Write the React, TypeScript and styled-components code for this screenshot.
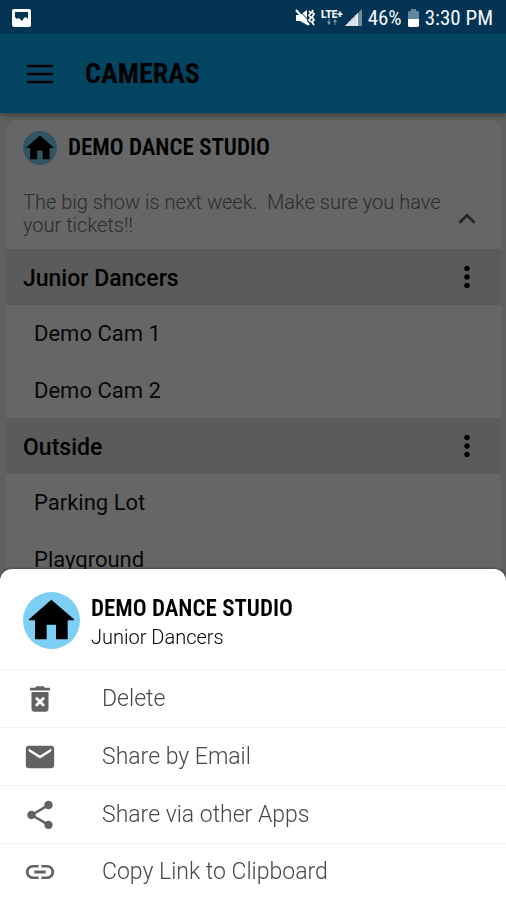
import React from "react";
import styled, { createGlobalStyle } from "styled-components";
import {
  MdDeleteForever,
  MdEmail,
  MdExpandLess,
  MdLink,
  MdMoreVert,
  MdShare,
} from "react-icons/md";
import type { IconType } from "react-icons";

const GlobalStyle = createGlobalStyle`
  *, *::before, *::after { box-sizing: border-box; }
  body {
    margin: 0;
    background: #ededed;
    font-family: Roboto, "Liberation Sans", sans-serif;
    color: #000;
  }
  h1, h2, h3, p, ul { margin: 0; padding: 0; }
  ul { list-style: none; }
  button { font: inherit; color: inherit; border: 0; padding: 0; background: none; cursor: pointer; }
`;

const condensed = `"Roboto Condensed", "Liberation Sans Narrow", Roboto, sans-serif`;

const Screen = styled.div`
  min-height: 100vh;
  display: flex;
  flex-direction: column;
`;

const StatusBar = styled.div`
  position: sticky;
  top: 0;
  z-index: 3;
  display: flex;
  align-items: center;
  justify-content: space-between;
  height: 34px;
  padding: 1px 13px 0 12px;
  background: #033453;
  color: #f4f8fb;
  font: 400 21px/24px ${condensed};
`;

const StatusGroup = styled.div`
  display: flex;
  align-items: center;
  gap: 6px;
`;

const NetworkGroup = styled.div`
  display: flex;
  align-items: center;
  gap: 2px;
`;

const AppBar = styled.header`
  display: flex;
  align-items: center;
  gap: 27px;
  height: 79px;
  padding: 1px 22px 0;
  background: #08aaf2;
  box-shadow: 0 2px 6px rgba(0, 0, 0, 0.4);
`;

const AppTitle = styled.h1`
  font: 700 28px/32px ${condensed};
`;

const IconButton = styled.button<{ $color?: string }>`
  display: flex;
  align-items: center;
  justify-content: center;
  width: 36px;
  height: 36px;
  flex: none;
  color: ${(p) => p.$color ?? "#000"};
`;

const Card = styled.main`
  margin: 7px 5px 0 6px;
  background: #fff;
  border-radius: 10px 10px 0 0;
  overflow: hidden;
`;

const StudioHeader = styled.div`
  display: flex;
  align-items: center;
  gap: 11px;
  height: 55px;
  padding: 0 17px;
`;

const StudioName = styled.h2`
  font: 600 23px/28px ${condensed};
`;

const Notice = styled.div`
  display: flex;
  align-items: flex-end;
  justify-content: space-between;
  gap: 8px;
  padding: 16px 16px 12px 17px;
`;

const NoticeText = styled.p`
  max-width: 430px;
  color: #707070;
  font-size: 20px;
  font-weight: 350;
  line-height: 23px;
  white-space: pre-wrap;
`;

const GroupBar = styled.div`
  display: flex;
  align-items: center;
  justify-content: space-between;
  height: 56px;
  padding: 0 16px 0 17px;
  background: #e3e3e3;
`;

const GroupName = styled.h3`
  padding-top: 3px;
  font-size: 23px;
  font-weight: 500;
  line-height: 28px;
`;

const CameraItem = styled.li`
  & + & { border-top: 1px solid #f8f8f8; }
`;

const CameraButton = styled.button`
  display: block;
  width: 100%;
  height: 56px;
  padding: 0 28px;
  text-align: left;
  font-size: 22px;
  color: #141414;
`;

const Scrim = styled.div`
  position: fixed;
  inset: 0;
  z-index: 2;
  background: rgba(0, 0, 0, 0.6);
`;

const Sheet = styled.section`
  position: fixed;
  left: 0;
  right: 0;
  bottom: 0;
  z-index: 4;
  background: #fff;
  border-radius: 12px 12px 0 0;
  box-shadow: 0 -1px 3px rgba(0, 0, 0, 0.3);
`;

const SheetHeader = styled.div`
  display: flex;
  align-items: center;
  gap: 11px;
  height: 100px;
  padding: 3px 23px 0;
`;

const SheetHeading = styled.div`
  padding-top: 4px;
`;

const SheetSubtitle = styled.p`
  font-size: 20px;
  font-weight: 300;
  line-height: 28px;
`;

const ActionItem = styled.li`
  border-top: 1px solid #f3f3f3;
`;

const ActionButton = styled.button`
  display: flex;
  align-items: center;
  gap: 45px;
  width: 100%;
  height: 57px;
  padding: 0 23px;
  text-align: left;
  font-size: 23px;
  font-weight: 300;
  line-height: 28px;
  color: #484848;

  ${ActionItem}:last-child & { height: 56px; }

  svg { color: #626262; flex: none; }
`;

const StudioBadge = ({ size }: { size: number }) => (
  <svg width={size} height={size} viewBox="0 0 171 171" aria-hidden="true">
    <circle cx="85.5" cy="85.5" r="85.5" fill="#7dcff5" />
    <path d="M85 23 18 82v3h18v57h35V98h28v44h35V85h19v-3z" fill="#000" />
  </svg>
);

const MenuIcon = () => (
  <svg width="28" height="20" viewBox="0 0 28 20" fill="none" aria-hidden="true">
    <path
      d="M2 2h24M2 10h24M2 18h24"
      stroke="currentColor"
      strokeWidth="2.4"
      strokeLinecap="round"
    />
  </svg>
);

const PictureIcon = () => (
  <svg width="19" height="18" viewBox="0 0 19 18" aria-hidden="true">
    <rect width="19" height="18" rx="2" fill="#fff" />
    <path d="M3 3h13v7l-2-2-2 1-2 3-3-3-2 1-2-2z" fill="#033453" />
  </svg>
);

const MutedIcon = () => (
  <svg width="20" height="18" viewBox="0 0 20 18" fill="none" aria-hidden="true">
    <path d="M1 6h4l7-5v15l-7-4H1z" fill="#fff" />
    <path d="M3 0l12 13" stroke="#033453" strokeWidth="1" />
    <path d="M1 1l13 15" stroke="#fff" strokeWidth="2" />
    <path
      d="M14 2l2 2-2 2 2 3-2 2 2 2M18 1l-1 2 2 2-2 3 2 3-2 2 2 3"
      stroke="#fff"
      strokeWidth="1.7"
    />
  </svg>
);

const Network = styled.span`
  display: flex;
  flex-direction: column;
  align-items: center;
  font: 900 10px/9px Roboto, sans-serif;
`;

const DataArrows = () => (
  <svg width="10" height="6" viewBox="0 0 10 6" fill="#7f9bad" aria-hidden="true">
    <path d="M1.5 0h1v3H4L2 6 0 3h1.5zM8 0l2 3H8.500v3h-1V3H6z" />
  </svg>
);

const SignalIcon = () => (
  <svg width="17" height="17" viewBox="0 0 17 17" aria-hidden="true">
    <path d="M17 0v17H0z" fill="#6f8ea2" />
    <path d="M13 4v13H0z" fill="#e8eff3" />
    <path d="M4 12v5M7 9v8M10 6v11" stroke="#9fb4c1" strokeWidth="0.6" />
  </svg>
);

const BatteryIcon = () => (
  <svg width="11" height="18" viewBox="0 0 11 18" aria-hidden="true">
    <path d="M3 0h5v2h2l1 1v7H0V3l1-1h2z" fill="#64879d" />
    <path d="M0 10h11v7l-1 1H1l-1-1z" fill="#fff" />
  </svg>
);

const groups = [
  { name: "Junior Dancers", cameras: ["Demo Cam 1", "Demo Cam 2"] },
  { name: "Outside", cameras: ["Parking Lot", "Playground"] },
];

const actions: { label: string; Icon: IconType }[] = [
  { label: "Delete", Icon: MdDeleteForever },
  { label: "Share by Email", Icon: MdEmail },
  { label: "Share via other Apps", Icon: MdShare },
  { label: "Copy Link to Clipboard", Icon: MdLink },
];

export default function App() {
  return (
    <>
      <GlobalStyle />
      <Screen>
        <StatusBar>
          <PictureIcon />
          <StatusGroup>
            <MutedIcon />
            <NetworkGroup>
              <Network>
                LTE+
                <DataArrows />
              </Network>
              <SignalIcon />
            </NetworkGroup>
            <span>46%</span>
            <BatteryIcon />
            <span>3:30 PM</span>
          </StatusGroup>
        </StatusBar>
        <AppBar>
          <IconButton aria-label="Open menu">
            <MenuIcon />
          </IconButton>
          <AppTitle>CAMERAS</AppTitle>
        </AppBar>
        <Card>
          <StudioHeader>
            <StudioBadge size={34} />
            <StudioName>DEMO DANCE STUDIO</StudioName>
          </StudioHeader>
          <Notice>
            <NoticeText>{"The big show is next week.  Make sure you have your tickets!!"}</NoticeText>
            <IconButton $color="#606060" aria-label="Collapse">
              <MdExpandLess size={34} />
            </IconButton>
          </Notice>
          {groups.map((group) => (
            <section key={group.name}>
              <GroupBar>
                <GroupName>{group.name}</GroupName>
                <IconButton aria-label={`${group.name} options`}>
                  <MdMoreVert size={34} />
                </IconButton>
              </GroupBar>
              <ul>
                {group.cameras.map((camera) => (
                  <CameraItem key={camera}>
                    <CameraButton>{camera}</CameraButton>
                  </CameraItem>
                ))}
              </ul>
            </section>
          ))}
        </Card>
      </Screen>
      <Scrim />
      <Sheet role="dialog" aria-labelledby="sheet-title">
        <SheetHeader>
          <StudioBadge size={57} />
          <SheetHeading>
            <StudioName id="sheet-title">DEMO DANCE STUDIO</StudioName>
            <SheetSubtitle>Junior Dancers</SheetSubtitle>
          </SheetHeading>
        </SheetHeader>
        <ul>
          {actions.map(({ label, Icon }) => (
            <ActionItem key={label}>
              <ActionButton>
                <Icon size={34} />
                {label}
              </ActionButton>
            </ActionItem>
          ))}
        </ul>
      </Sheet>
    </>
  );
}
